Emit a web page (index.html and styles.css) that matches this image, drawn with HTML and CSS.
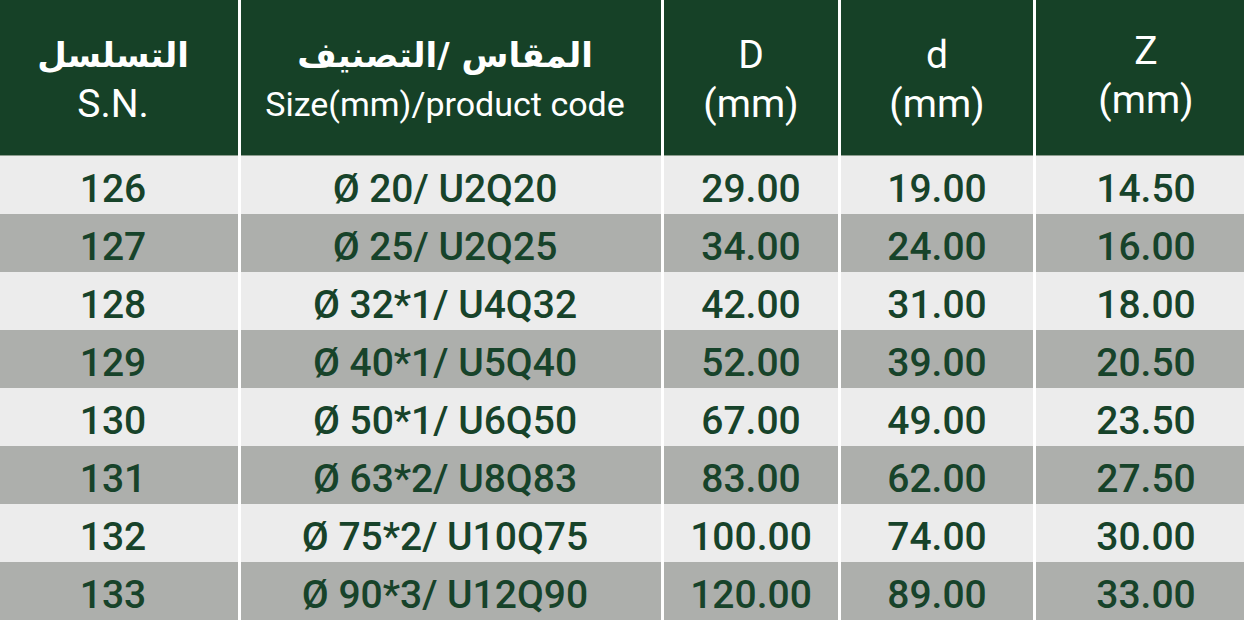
FILE: index.html
```html
<!DOCTYPE html>
<html lang="en">
<head>
<meta charset="utf-8">
<title>Product table</title>
<link rel="stylesheet" href="styles.css">
</head>
<body>
<div class="sheet">
  <div class="row head">
    <div class="cell c1"><span class="ar" dir="rtl">التسلسل</span><span class="en">S.N.</span></div>
    <div class="cell c2"><span class="ar" dir="rtl">المقاس /التصنيف</span><span class="en small">Size(mm)/product code</span></div>
    <div class="cell c3"><span class="en">D</span><span class="en">(mm)</span></div>
    <div class="cell c4"><span class="en">d</span><span class="en">(mm)</span></div>
    <div class="cell c5 up"><span class="en">Z</span><span class="en">(mm)</span></div>
  </div>
  <div class="row light"><div class="cell c1">126</div><div class="cell c2">Ø 20/ U2Q20</div><div class="cell c3">29.00</div><div class="cell c4">19.00</div><div class="cell c5">14.50</div></div>
  <div class="row dark"><div class="cell c1">127</div><div class="cell c2">Ø 25/ U2Q25</div><div class="cell c3">34.00</div><div class="cell c4">24.00</div><div class="cell c5">16.00</div></div>
  <div class="row light"><div class="cell c1">128</div><div class="cell c2">Ø 32*1/ U4Q32</div><div class="cell c3">42.00</div><div class="cell c4">31.00</div><div class="cell c5">18.00</div></div>
  <div class="row dark"><div class="cell c1">129</div><div class="cell c2">Ø 40*1/ U5Q40</div><div class="cell c3">52.00</div><div class="cell c4">39.00</div><div class="cell c5">20.50</div></div>
  <div class="row light"><div class="cell c1">130</div><div class="cell c2">Ø 50*1/ U6Q50</div><div class="cell c3">67.00</div><div class="cell c4">49.00</div><div class="cell c5">23.50</div></div>
  <div class="row dark"><div class="cell c1">131</div><div class="cell c2">Ø 63*2/ U8Q83</div><div class="cell c3">83.00</div><div class="cell c4">62.00</div><div class="cell c5">27.50</div></div>
  <div class="row light"><div class="cell c1">132</div><div class="cell c2">Ø 75*2/ U10Q75</div><div class="cell c3">100.00</div><div class="cell c4">74.00</div><div class="cell c5">30.00</div></div>
  <div class="row dark"><div class="cell c1">133</div><div class="cell c2">Ø 90*3/ U12Q90</div><div class="cell c3">120.00</div><div class="cell c4">89.00</div><div class="cell c5">33.00</div></div>
</div>
</body>
</html>
```

FILE: styles.css
```css
html, body {
  margin: 0;
  padding: 0;
  background: #ffffff;
}

.sheet {
  width: 1244px;
  height: 620px;
  display: flex;
  flex-direction: column;
  overflow: hidden;
  font-family: Roboto, "Liberation Sans", sans-serif;
}

.row {
  display: grid;
  grid-template-columns: 238px 420px 174px 192px 208px;
  column-gap: 3px;
  background: #ffffff;
}

.head {
  height: 156px;
}

.head .cell {
  background: #164127;
  border-bottom: 1px solid #8c9c8e;
  color: #ffffff;
  display: flex;
  flex-direction: column;
  align-items: center;
  justify-content: center;
  padding-top: 4px;
  box-sizing: border-box;
}

.head .cell.up {
  padding-top: 0;
  padding-bottom: 4px;
}

.head .en {
  font-family: Roboto, "Liberation Sans", sans-serif;
  font-size: 39px;
  line-height: 49px;
  font-weight: 400;
}

.head .en.small {
  font-size: 34px;
}

.head .ar {
  font-family: "DejaVu Sans", sans-serif;
  font-weight: 700;
  font-size: 34px;
  line-height: 49px;
}

.cell.c1,
.cell.c2 {
  padding-right: 12px;
}

.cell.c5 {
  padding-left: 12px;
}

.light .cell,
.dark .cell {
  height: 58px;
  box-sizing: border-box;
  padding-top: 9px;
  line-height: 49px;
  text-align: center;
  font-size: 39px;
  font-weight: 500;
  color: #17432a;
}

.light .cell {
  background: #ececec;
}

.dark .cell {
  background: #adafac;
}
```
